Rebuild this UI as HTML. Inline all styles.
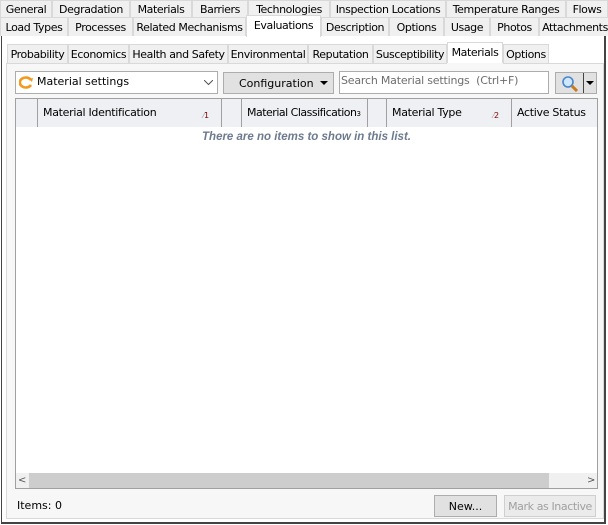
<!DOCTYPE html><html><head><style>
body{margin:0;width:608px;height:525px;background:#fff;position:relative;overflow:hidden;font-family:"DejaVu Sans","Liberation Sans",sans-serif;font-size:11px;color:#000}
div{position:absolute;box-sizing:border-box}
.t{background:#f0f0f0;border:1px solid #d9d9d9;border-bottom:none;text-align:center;line-height:17px;white-space:nowrap;letter-spacing:-0.4px}
.s{background:#fff;border:1px solid #d9d9d9;border-bottom:none}
.h{top:99px;height:28px;line-height:28px;border-right:1px solid #a0a0a0;padding-left:5px;white-space:nowrap;letter-spacing:-0.3px}
</style></head><body>
<div style="left:0;top:0;width:608px;height:36px;background:#f0f0f0"></div>
<div class="t" style="left:0;top:0;width:52px;height:17px">General</div>
<div class="t" style="left:52px;top:0;width:78px;height:17px">Degradation</div>
<div class="t" style="left:130px;top:0;width:62px;height:17px">Materials</div>
<div class="t" style="left:192px;top:0;width:56px;height:17px">Barriers</div>
<div class="t" style="left:248px;top:0;width:82px;height:17px">Technologies</div>
<div class="t" style="left:330px;top:0;width:116px;height:17px">Inspection Locations</div>
<div class="t" style="left:446px;top:0;width:120px;height:17px">Temperature Ranges</div>
<div class="t" style="left:566px;top:0;width:42px;height:17px">Flows</div>
<div class="t" style="left:0;top:17px;width:68px;height:19px;line-height:20px">Load Types</div>
<div class="t" style="left:68px;top:17px;width:65px;height:19px;line-height:20px">Processes</div>
<div class="t" style="left:133px;top:17px;width:113px;height:19px;line-height:20px">Related Mechanisms</div>
<div class="t s" style="left:246px;top:15px;width:75px;height:22px;line-height:19px">Evaluations</div>
<div class="t" style="left:321px;top:17px;width:68px;height:19px;line-height:20px">Description</div>
<div class="t" style="left:389px;top:17px;width:55px;height:19px;line-height:20px">Options</div>
<div class="t" style="left:444px;top:17px;width:46px;height:19px;line-height:20px">Usage</div>
<div class="t" style="left:490px;top:17px;width:49px;height:19px;line-height:20px">Photos</div>
<div class="t" style="left:539px;top:17px;width:72px;height:19px;line-height:20px">Attachments</div>
<div style="left:1px;top:36px;width:605px;height:488px;border:1px solid #d9d9d9;border-top:none;border-right:2px solid #444;border-bottom:2px solid #444;border-left:1px solid #444"></div>
<div class="t" style="left:7px;top:44px;width:61px;height:19px;line-height:20px">Probability</div>
<div class="t" style="left:68px;top:44px;width:61px;height:19px;line-height:20px">Economics</div>
<div class="t" style="left:129px;top:44px;width:99px;height:19px;line-height:20px">Health and Safety</div>
<div class="t" style="left:228px;top:44px;width:80px;height:19px;line-height:20px">Environmental</div>
<div class="t" style="left:308px;top:44px;width:65px;height:19px;line-height:20px">Reputation</div>
<div class="t" style="left:373px;top:44px;width:74px;height:19px;line-height:20px">Susceptibility</div>
<div class="t s" style="left:447px;top:42px;width:56px;height:22px;line-height:19px">Materials</div>
<div class="t" style="left:503px;top:44px;width:46px;height:19px;line-height:20px">Options</div>
<div style="left:6px;top:63px;width:598px;height:456px;border:1px solid #d9d9d9;background:#f7f7f7"></div>
<div style="left:447px;top:63px;width:56px;height:1px;background:#f7f7f7"></div>
<div style="left:15px;top:71px;width:203px;height:23px;background:#fff;border:1px solid #acacac;line-height:20px;padding-left:21px">Material settings
<svg style="position:absolute;left:3px;top:4px" width="15" height="13" viewBox="0 0 15 13"><path d="M12 4A6 5 0 1 0 12 9" stroke="#f39a1c" stroke-width="2.6" fill="none"/><path d="M10 3l4-1-1 4z" fill="#f39a1c"/></svg>
<svg style="position:absolute;right:4px;top:8px" width="9" height="6"><path d="M0 0L4.5 4.5L9 0" stroke="#555" fill="none"/></svg></div>
<div style="left:223px;top:72px;width:111px;height:22px;background:#e1e1e1;border:1px solid #adadad;line-height:21px;padding-left:15px">Configuration<span style="position:absolute;right:5px;top:8px;border:4px solid transparent;border-top:4px solid #000"></span></div>
<div style="left:339px;top:71px;width:210px;height:23px;background:#fff;border:1px solid #acacac;line-height:18px;padding-left:1px;color:#6d6d6d;letter-spacing:-0.2px">Search Material settings &nbsp;(Ctrl+F)</div>
<div style="left:555px;top:72px;width:42px;height:22px;background:#e1e1e1;border:1px solid #adadad"><svg style="position:absolute;left:5px;top:2px" width="18" height="17"><circle cx="7" cy="7" r="5" fill="#cfe6ff" stroke="#4a86c8" stroke-width="1.6"/><path d="M11 11l5 5" stroke="#c87a1c" stroke-width="3"/></svg><div style="left:27px;top:0;width:1px;height:20px;background:#444"></div><span style="position:absolute;left:30px;top:8px;border:4px solid transparent;border-top:4px solid #000"></span></div>
<div style="left:15px;top:98px;width:583px;height:391px;background:#fff;border:1px solid #a0a0a0"></div>
<div style="left:16px;top:99px;width:581px;height:28px;background:#eef0f4"></div>
<div class="h" style="left:16px;width:22px"></div>
<div class="h" style="left:38px;width:184px">Material Identification<span style="position:absolute;left:165px;font-size:8px;color:#999;top:3px">⁄<span style="color:#800">1</span></span></div>
<div class="h" style="left:222px;width:20px"></div>
<div class="h" style="left:242px;width:126px;letter-spacing:-0.5px">Material Classification<span style="font-size:7px">3</span></div>
<div class="h" style="left:368px;width:19px"></div>
<div class="h" style="left:387px;width:125px">Material Type<span style="position:absolute;left:106px;font-size:8px;color:#999;top:3px">⁄<span style="color:#800">2</span></span></div>
<div class="h" style="left:512px;width:85px;border:none">Active Status</div>
<div style="left:16px;top:128px;width:581px;text-align:center;color:#6d7a8f;font-style:italic;font-weight:bold;line-height:18px;font-family:'Liberation Sans',sans-serif;font-size:11.5px">There are no items to show in this list.</div>
<div style="left:16px;top:473px;width:581px;height:15px;background:#f0f0f0"></div>
<div style="left:29px;top:473px;width:520px;height:15px;background:#cdcdcd"></div>
<div style="left:18px;top:473px;line-height:15px;color:#555;font-size:10px">&lt;</div>
<div style="left:587px;top:473px;line-height:15px;color:#555;font-size:10px">&gt;</div>
<div style="left:17px;top:499px;line-height:14px">Items: 0</div>
<div style="left:434px;top:495px;width:63px;height:22px;background:#e1e1e1;border:1px solid #adadad;text-align:center;line-height:21px">New...</div>
<div style="left:504px;top:495px;width:92px;height:22px;background:#ebebeb;border:1px solid #cfcfcf;text-align:center;line-height:21px;color:#a0a0a0;letter-spacing:-0.4px">Mark as Inactive</div>
</body></html>
